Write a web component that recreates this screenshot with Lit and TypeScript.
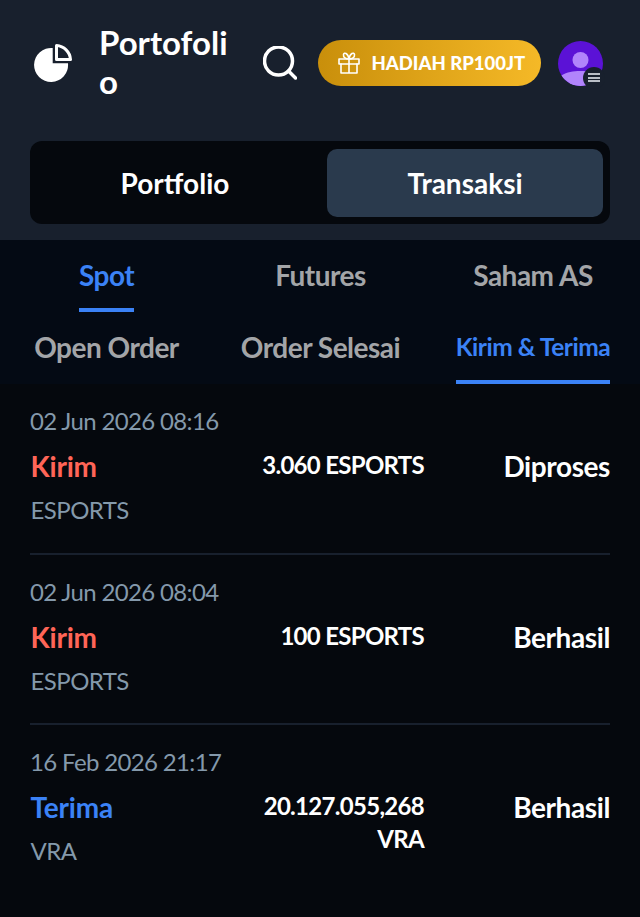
import { LitElement, html, css } from "lit";
import { customElement } from "lit/decorators.js";

interface Row { date: string; type: string; cls: string; asset: string; amount: string; status: string; }
const rows: Row[] = [
  { date: "02 Jun 2026 08:16", type: "Kirim", cls: "red", asset: "ESPORTS", amount: "3.060 ESPORTS", status: "Diproses" },
  { date: "02 Jun 2026 08:04", type: "Kirim", cls: "red", asset: "ESPORTS", amount: "100 ESPORTS", status: "Berhasil" },
  { date: "16 Feb 2026 21:17", type: "Terima", cls: "blue", asset: "VRA", amount: "20.127.055,268 VRA", status: "Berhasil" },
];

@customElement("app-root")
export class AppRoot extends LitElement {
  static styles = css`
    :host { display: block; width: 640px; height: 917px; overflow: hidden; background: #05080d; font-family: Lato, "Open Sans", sans-serif; color: #fff; }
    * { box-sizing: border-box; }
    .top { height: 240px; background: #18202d; padding: 25px 30px 0; }
    .bar { display: flex; align-items: center; height: 76px; }
    .logo { width: 38px; height: 38px; margin: 0 0 0 4px; flex: none; }
    .title { width: 135px; margin-left: 27px; padding-bottom: 2px; font-size: 33px; line-height: 39px; font-weight: 700; word-break: break-all; flex: none; }
    .search { width: 34px; height: 34px; margin-left: 29px; flex: none; }
    .promo { width: 223px; height: 46px; margin-left: 21px; border-radius: 23px; background: linear-gradient(90deg, #c98f0b, #f5b927); display: flex; align-items: center; padding-left: 19px; gap: 10.500px; font-size: 18.500px; font-weight: 900; flex: none; white-space: nowrap; }
    .promo svg { width: 24px; height: 24px; flex: none; }
    .avatar { position: relative; width: 44px; height: 45px; margin-left: 17px; flex: none; }
    .avatar svg.face { width: 45px; height: 45px; display: block; }
    .menu { position: absolute; right: -3px; bottom: -3px; width: 22px; height: 22px; border-radius: 50%; background: #18202d; display: flex; flex-direction: column; align-items: center; justify-content: center; gap: 1.500px; }
    .menu i { display: block; width: 12px; height: 2px; background: #b9bec6; }
    .switch { margin-top: 40px; height: 83px; background: #05080d; border-radius: 12px; padding: 8px 7px 7px; display: grid; grid-template-columns: 276px 276px; gap: 14px; }
    .switch div { display: flex; align-items: center; justify-content: center; font-size: 28px; font-weight: 700; border-radius: 10px; }
    .switch .on { background: #2a3a4d; }
    .tabs { height: 144px; background: #040a14; }
    .tabrow { display: grid; grid-template-columns: 213px 215px 210px; height: 72px; }
    .tab { display: flex; justify-content: center; }
    .tab span { display: block; height: 72px; padding-top: 17px; font-size: 28px; line-height: 36px; font-weight: 700; color: #a3a5a8; letter-spacing: -0.5px; white-space: nowrap; }
    .tab.on span { color: #3b82f6; border-bottom: 4px solid #3b82f6; }
    .small span { font-size: 24.500px; letter-spacing: -0.45px; }
    .row { margin: 0 30px; height: 170.500px; padding-top: 19px; border-bottom: 2px solid #18202d; display: grid; grid-template-columns: 1fr 210px 186px; grid-template-rows: 36px auto; }
    .row:last-child { border: none; }
    .date { grid-column: 1 / -1; font-size: 24px; line-height: 36px; color: #8499ab; letter-spacing: -0.65px; }
    .col { display: flex; flex-direction: column; padding-left: 0.500px; }
    .type { font-size: 28px; line-height: 38px; font-weight: 700; margin-top: 8px; letter-spacing: -0.2px; }
    .red { color: #ff6557; }
    .blue { color: #3b82f6; }
    .asset { font-size: 24px; line-height: 36px; color: #8499ab; margin-top: 7px; letter-spacing: -0.55px; }
    .amount { font-size: 24px; line-height: 33px; font-weight: 700; text-align: right; margin-top: 9px; letter-spacing: -0.7px; }
    .status { font-size: 28px; line-height: 38px; font-weight: 700; text-align: right; margin-top: 8px; letter-spacing: -0.4px; }
  `;

  render() {
    return html`
      <div class="top">
        <div class="bar">
          <svg class="logo" viewBox="34 44 38 38">
            <path d="M52.700 48A17 17 0 1 0 68 63.300H52.700Z" fill="#fff"/>
            <path d="M56.500 45.500A15 15 0 0 1 70.500 59.500H56.500Z" fill="none" stroke="#fff" stroke-width="3" stroke-linejoin="round"/>
          </svg>
          <div class="title">Portofolio</div>
          <svg class="search" viewBox="263 47 34 34" fill="none" stroke="#fff" stroke-width="3.500" stroke-linecap="round">
            <circle cx="278.500" cy="62" r="14"/><path d="M288.500 72L295.500 79"/>
          </svg>
          <div class="promo">
            <svg viewBox="0 0 24 24" fill="none" stroke="#fff" stroke-width="1.600" stroke-linejoin="round" stroke-linecap="round">
              <rect x="2" y="8" width="20" height="5"/><path d="M4 13v9h16v-9M12 8v14M12 8C9 8 6 6.500 6.500 3.500 7 1 11 2 12 8ZM12 8c3 0 6-1.500 5.500-4.500C17 1 13 2 12 8Z"/>
            </svg>
            HADIAH RP100JT
          </div>
          <div class="avatar">
            <svg class="face" viewBox="0 0 45 45">
              <circle cx="22.500" cy="22.500" r="22.500" fill="#5b12d6"/>
              <circle cx="22.500" cy="19" r="8" fill="#b184fb"/>
              <path d="M3.500 34.500C9 31 15 30 22.500 30S36 31 41.500 34.500A22.500 22.500 0 0 1 3.500 34.500Z" fill="#b184fb"/>
            </svg>
            <div class="menu"><i></i><i></i><i></i></div>
          </div>
        </div>
        <div class="switch"><div>Portfolio</div><div class="on">Transaksi</div></div>
      </div>
      <div class="tabs">
        <div class="tabrow">
          <div class="tab on"><span>Spot</span></div>
          <div class="tab"><span>Futures</span></div>
          <div class="tab"><span>Saham AS</span></div>
        </div>
        <div class="tabrow second">
          <div class="tab"><span>Open Order</span></div>
          <div class="tab"><span>Order Selesai</span></div>
          <div class="tab on small"><span>Kirim &amp; Terima</span></div>
        </div>
      </div>
      ${rows.map((r) => html`
        <div class="row">
          <div class="date">${r.date}</div>
          <div class="col"><div class="type ${r.cls}">${r.type}</div><div class="asset">${r.asset}</div></div>
          <div class="amount">${r.amount}</div>
          <div class="status">${r.status}</div>
        </div>`)}
    `;
  }
}
